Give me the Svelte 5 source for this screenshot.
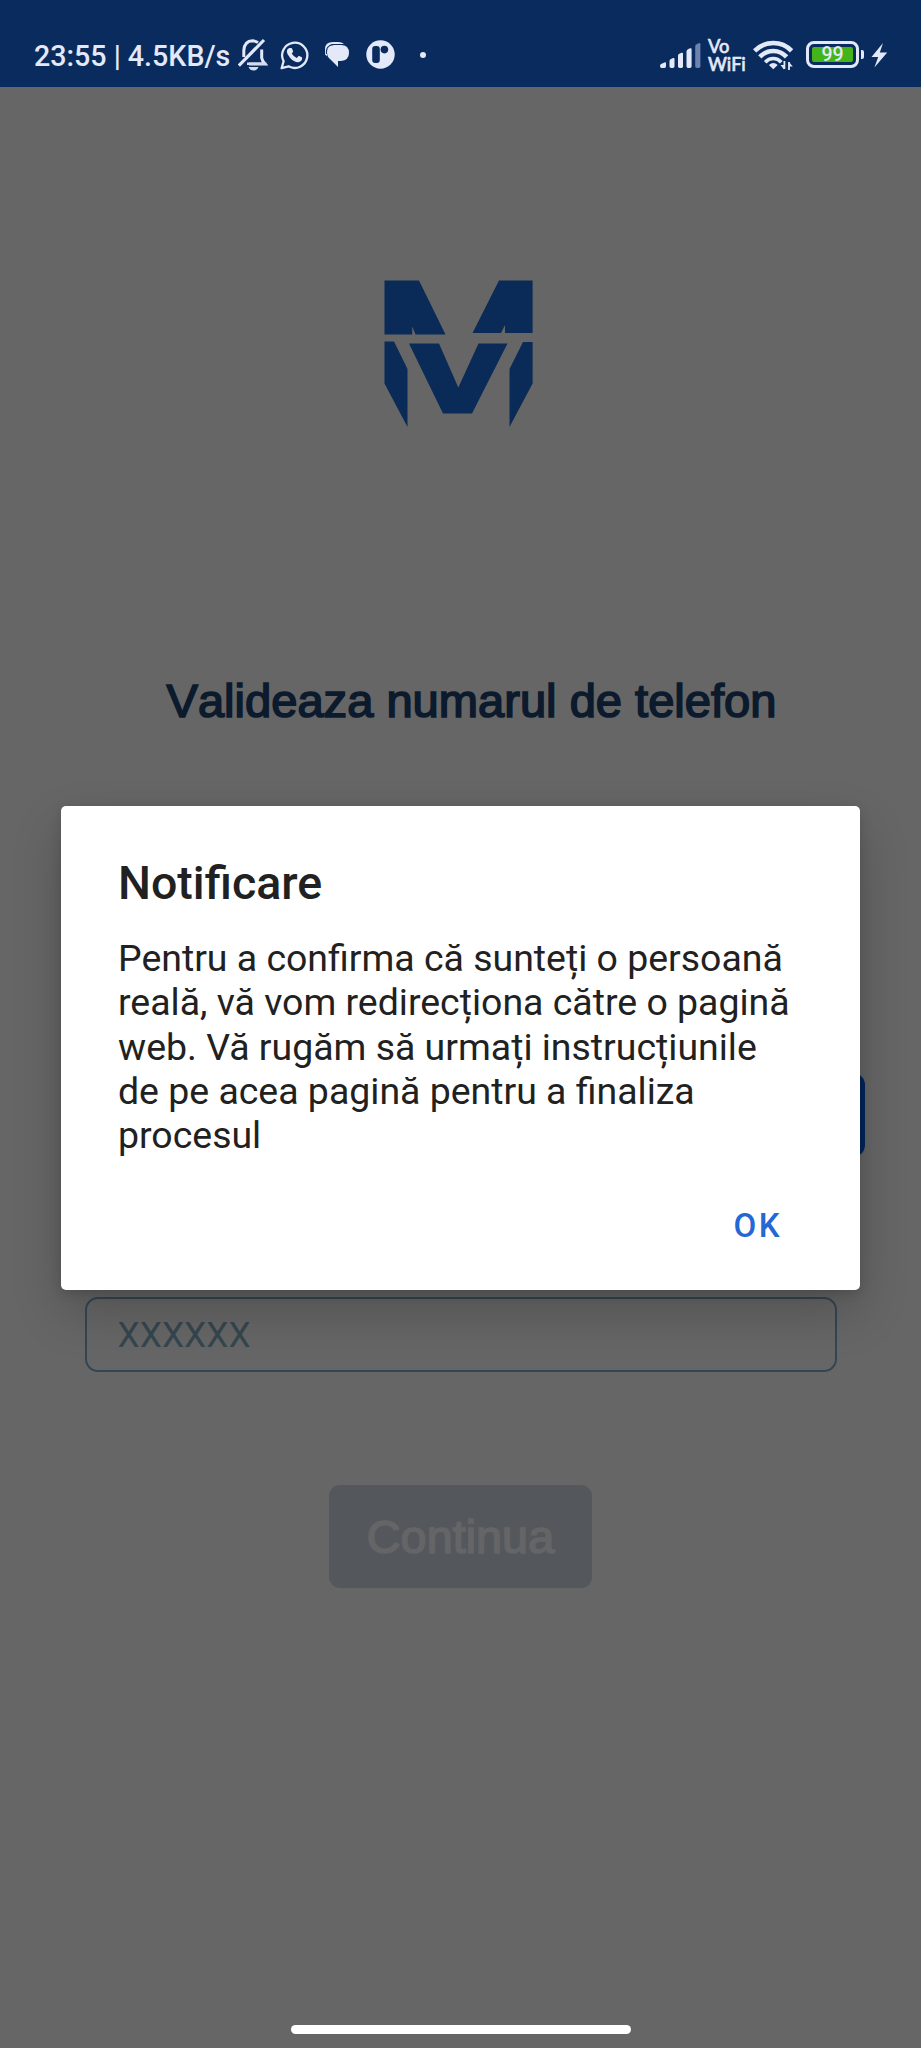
<script>
  const title = 'Notificare';
  const lines = [
    'Pentru a confirma că sunteți o persoană',
    'reală, vă vom redirecționa către o pagină',
    'web. Vă rugăm să urmați instrucțiunile',
    'de pe acea pagină pentru a finaliza',
    'procesul'
  ];
</script>

<div class="screen">
  <header class="status">
    <span class="clock">23:55 | 4.5KB/s</span>
    <div class="notifications">
      <svg width="30" height="34" viewBox="0 0 30 34" fill="none" stroke="#e3e9f8" stroke-width="3">
        <path d="M5.8 19V12.5Q6.5 3 14.5 2.8Q17.5 2.8 20 4.6M23.7 11.5V20Q24.2 23 27 26H11" />
        <path d="M.8 27.6L26 2" stroke-width="3.2" />
        <path d="M9 24.5H28.5V27H9ZM10.5 29H20.5Q19 32.5 15.5 32.5Q12 32.5 10.5 29Z" fill="#d6dbea" stroke="none" />
      </svg>
      <svg width="29" height="30" viewBox="0 0 29 30" fill="none">
        <path d="M1.6 28.2L3.6 21.2A12.6 12.6 0 1 1 8.6 26.3Z" stroke="#e3e9f8" stroke-width="2.3" stroke-linejoin="round" />
        <path d="M9.3 8H11.2Q11.8 8 12.1 8.8L13 11.1Q13.2 11.7 12.8 12.2L11.7 13.5Q13.7 16.8 16.8 18.1L18.3 16.3Q18.7 15.8 19.3 16.1L21.8 17.3Q22.3 17.6 22.2 18.3Q21.7 22 18.2 22.2Q13.8 22 10 17.7Q6.8 14.2 6.8 11.4Q7 8.6 9.3 8Z" fill="#e3e9f8" />
      </svg>
      <svg width="26" height="28" viewBox="0 0 26 28">
        <path d="M1 13V8Q1 1 9 1H14Q18 1 20 3H10Q3 4 3 10V15Q1 14 1 13Z" fill="#e3e9f8" />
        <path d="M10 4H17Q25 4 25 12Q25 19 17 20H14V26L6 18Q3 16 3 11Q3 4 10 4Z" fill="#e3e9f8" />
        <path d="M2.4 13V10Q3 3.5 10 3.5H21" fill="none" stroke="#0a2b5e" stroke-width="1" />
      </svg>
      <svg width="29" height="29" viewBox="0 0 29 29">
        <circle cx="14.5" cy="14.5" r="14.2" fill="#e3e9f8" />
        <rect x="6.2" y="6" width="7.6" height="17" rx="3" fill="#0a2b5e" />
        <circle cx="18.4" cy="9.6" r="3.8" fill="#0a2b5e" />
      </svg>
      <i class="more"></i>
    </div>
    <div class="system">
      <svg width="42" height="28" viewBox="0 0 42 28" fill="#e3e9f8">
        <path d="M0 25Q0 23.3 1.6 22.8L4.5 21.5Q6 21 6 22.4V25Q6 27 4.5 27H1.6Q0 27 0 25Z" />
        <path d="M9.5 20Q9.5 18.6 11 18L13 17.1Q14.5 16.6 14.5 18V25.3Q14.5 27 12.9 27H11.2Q9.5 27 9.5 25.3Z" />
        <path d="M18 15Q18 13.4 19.3 12.8L21.5 11.8Q23 11.2 23 12.8V25.3Q23 27 21.5 27H19.6Q18 27 18 25.3Z" />
        <path d="M26.5 10.6Q26.5 9 28 8.3L30 7.3Q31.6 6.7 31.6 8.3V25.3Q31.6 27 30 27H28.1Q26.5 27 26.5 25.3Z" />
        <path d="M35.2 5.6Q35.2 4 36.7 3.2L38.7 2.2Q40.4 1.6 40.4 3.3V25.3Q40.4 27 38.7 27H36.9Q35.2 27 35.2 25.3Z" fill="#6d82ae" />
      </svg>
      <div class="vowifi"><span>Vo</span><span>WiFi</span></div>
      <svg class="wifi" width="41" height="31" viewBox="0 0 41 31" fill="none" stroke="#e3e9f8" stroke-width="4.6">
        <path d="M1.6 11.8Q9.5 4 20.3 4Q31 4 38.6 11.8" />
        <path d="M6.8 17.9Q12.5 12 20.3 12Q28 12 33.6 17.9" />
        <path d="M12.2 23.2Q15.6 19.5 20.3 19.5Q25 19.5 28.3 23.2" stroke-width="3.6" />
        <path d="M15.9 26Q20.3 21.8 24.7 26L20.3 30.2Z" fill="#e3e9f8" stroke="none" />
        <path d="M31.4 22V30M36 31V23" stroke-width="1.8" />
        <path d="M27.5 26L31 30.5V26ZM36 23L39.8 27.5H36Z" fill="#e3e9f8" stroke="none" />
      </svg>
      <div class="battery"><span class="charge">99</span><i></i></div>
      <svg class="bolt" width="17" height="26" viewBox="0 0 17 26"><path d="M12 1L.5 15H7.2L3.4 25.4L16.2 10.6H8.8Z" fill="#e3e9f8" /></svg>
    </div>
  </header>

  <main>
    <svg class="logo" width="150" height="148" viewBox="0 0 150 148" fill="#0a2a57">
      <path d="M.5.5H35L61.5 54.6H31.5L28.2 46.5V54.6H.5Z" />
      <path d="M115 .5H148.6V53H121V45L117 53H88.5Z" />
      <path d="M.5 61.5H10L23.5 89V147L.5 103.5Z" />
      <path d="M25 63.5H55L74.3 107.5L94.5 63.5H123.5L88 133.5H59Z" />
      <path d="M139 62H148.6V103.5L125.5 147V89Z" />
    </svg>
    <h1>Valideaza numarul de telefon</h1>
    <button class="send" aria-label="Trimite"></button>
    <input placeholder="XXXXXX" aria-label="Cod" />
    <button class="continue">Continua</button>
  </main>

  <div class="homebar"></div>

  <section class="dialog">
    <h2>{title}</h2>
    <p>{#each lines as line}<span>{line}</span>{/each}</p>
    <button>OK</button>
  </section>
</div>

<style>
  :global(body) { margin: 0; background: #666; }
  .screen { position: relative; box-sizing: border-box; width: 921px; height: 2048px; overflow: hidden; display: flex; flex-direction: column; align-items: center; background: #666; font-family: Roboto, sans-serif; }
  svg { display: block; flex: none; }
  button { border: 0; padding: 0; font: inherit; }
  .status { box-sizing: border-box; width: 100%; height: 87px; flex: none; padding: 22px 33px 0 34px; display: flex; align-items: center; background: #0a2b5e; color: #e3e9f8; }
  .clock { width: 204px; padding-top: 2px; font-size: 28.6px; font-weight: 500; line-height: 34px; white-space: nowrap; }
  .notifications { display: flex; align-items: center; flex: 1; }
  .notifications svg + svg { margin-left: 12px; }
  .notifications svg:nth-child(3) { margin-left: 15px; }
  .notifications svg:nth-child(4) { margin-left: 16px; }
  .more { width: 6px; height: 6px; margin-left: 25px; border-radius: 50%; background: #e3e9f8; }
  .system { display: flex; align-items: center; }
  .vowifi { display: flex; flex-direction: column; width: 37px; margin-left: 6px; font: 500 18.2px/18px Lato, sans-serif; -webkit-text-stroke: .6px; }
  .wifi { margin-left: 8px; }
  .battery { box-sizing: border-box; position: relative; width: 53px; height: 27px; margin-left: 12px; padding: 3px; border: 3px solid #e3e9f8; border-radius: 8px; }
  .charge { display: block; width: 41px; height: 15px; border-radius: 2px; background: #43b51b; text-align: center; font-size: 19.5px; font-weight: 500; line-height: 16px; }
  .battery i { position: absolute; right: -8px; top: 6px; width: 3px; height: 9px; border-radius: 0 2px 2px 0; background: #e3e9f8; }
  .bolt { margin-left: 12px; }

  main { width: 100%; display: flex; flex-direction: column; align-items: center; }
  .logo { margin: 193px 3px 0 0; }
  h1 { margin: 245px 0 0 22px; font: 400 47.1px/56px "Liberation Sans", Arial, sans-serif; font-kerning: none; white-space: nowrap; color: #0c1a2d; -webkit-text-stroke: 1.7px #0c1a2d; }
  .send { width: 140px; height: 84px; margin: 344px 56px 0 0; align-self: flex-end; border-radius: 12px; background: #01265c; }
  input { box-sizing: border-box; width: 752px; height: 75px; margin-top: 140px; padding: 0 31px; border: 2.5px solid #344653; border-radius: 13px; background: transparent; font: 400 35.4px Roboto, sans-serif; }
  input::placeholder { color: #35464f; opacity: 1; }
  .continue { width: 263px; height: 103px; margin-top: 113px; border-radius: 11px; background: #54575b; color: #646566; font: 400 46.8px "Liberation Sans", Arial, sans-serif; -webkit-text-stroke: 1.7px #646566; }
  .homebar { width: 340px; height: 9px; margin: auto 0 14px; border-radius: 5px; background: #fff; }

  .dialog { box-sizing: border-box; position: absolute; left: 61px; top: 806px; width: 799px; height: 484px; padding: 49px 57px 0; display: flex; flex-direction: column; border-radius: 5px; background: #fff; color: #212121; box-shadow: 0 22px 50px rgba(0, 0, 0, .2), 0 3px 12px rgba(0, 0, 0, .14); }
  h2 { margin: 0; font-size: 46.5px; line-height: 56px; font-weight: 500; }
  p { margin: 25px 0 0; font-size: 37.45px; line-height: 44.3px; }
  p span { display: block; white-space: nowrap; }
  .dialog button { align-self: flex-end; margin: 49px 21px 0 0; background: none; color: #2368d5; font-size: 33px; font-weight: 500; line-height: 40px; letter-spacing: 2.4px; }
</style>
